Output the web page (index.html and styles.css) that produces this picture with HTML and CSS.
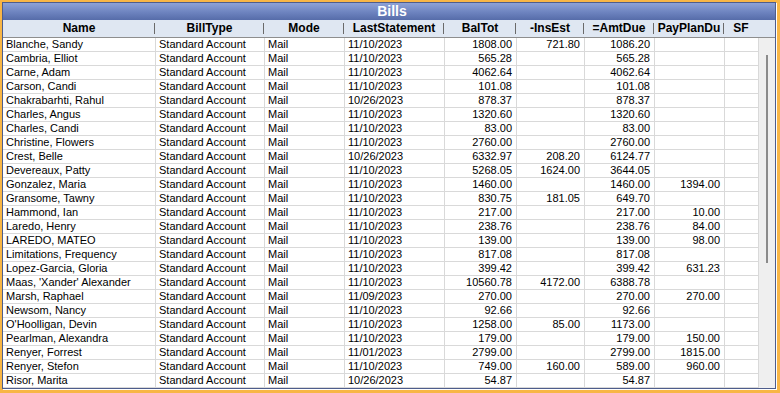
FILE: index.html
```html
<!DOCTYPE html>
<html>
<head>
<meta charset="utf-8">
<link rel="stylesheet" href="styles.css">
</head>
<body>
<div class="win">
  <div class="title">Bills</div>
  <div class="head">
    <span>Name</span><span>BillType</span><span>Mode</span><span>LastStatement</span><span>BalTot</span><span>-InsEst</span><span>=AmtDue</span><span>PayPlanDu</span><span class="last">SF</span><span class="last"></span>
  </div>
  <div class="body">
    <div class="rows">
      <div class="r"><span>Blanche, Sandy</span><span>Standard Account</span><span>Mail</span><span>11/10/2023</span><span>1808.00</span><span>721.80</span><span>1086.20</span><span></span><span></span></div>
      <div class="r"><span>Cambria, Elliot</span><span>Standard Account</span><span>Mail</span><span>11/10/2023</span><span>565.28</span><span></span><span>565.28</span><span></span><span></span></div>
      <div class="r"><span>Carne, Adam</span><span>Standard Account</span><span>Mail</span><span>11/10/2023</span><span>4062.64</span><span></span><span>4062.64</span><span></span><span></span></div>
      <div class="r"><span>Carson, Candi</span><span>Standard Account</span><span>Mail</span><span>11/10/2023</span><span>101.08</span><span></span><span>101.08</span><span></span><span></span></div>
      <div class="r"><span>Chakrabarhti, Rahul</span><span>Standard Account</span><span>Mail</span><span>10/26/2023</span><span>878.37</span><span></span><span>878.37</span><span></span><span></span></div>
      <div class="r"><span>Charles, Angus</span><span>Standard Account</span><span>Mail</span><span>11/10/2023</span><span>1320.60</span><span></span><span>1320.60</span><span></span><span></span></div>
      <div class="r"><span>Charles, Candi</span><span>Standard Account</span><span>Mail</span><span>11/10/2023</span><span>83.00</span><span></span><span>83.00</span><span></span><span></span></div>
      <div class="r"><span>Christine, Flowers</span><span>Standard Account</span><span>Mail</span><span>11/10/2023</span><span>2760.00</span><span></span><span>2760.00</span><span></span><span></span></div>
      <div class="r"><span>Crest, Belle</span><span>Standard Account</span><span>Mail</span><span>10/26/2023</span><span>6332.97</span><span>208.20</span><span>6124.77</span><span></span><span></span></div>
      <div class="r"><span>Devereaux, Patty</span><span>Standard Account</span><span>Mail</span><span>11/10/2023</span><span>5268.05</span><span>1624.00</span><span>3644.05</span><span></span><span></span></div>
      <div class="r"><span>Gonzalez, Maria</span><span>Standard Account</span><span>Mail</span><span>11/10/2023</span><span>1460.00</span><span></span><span>1460.00</span><span>1394.00</span><span></span></div>
      <div class="r"><span>Gransome, Tawny</span><span>Standard Account</span><span>Mail</span><span>11/10/2023</span><span>830.75</span><span>181.05</span><span>649.70</span><span></span><span></span></div>
      <div class="r"><span>Hammond, Ian</span><span>Standard Account</span><span>Mail</span><span>11/10/2023</span><span>217.00</span><span></span><span>217.00</span><span>10.00</span><span></span></div>
      <div class="r"><span>Laredo, Henry</span><span>Standard Account</span><span>Mail</span><span>11/10/2023</span><span>238.76</span><span></span><span>238.76</span><span>84.00</span><span></span></div>
      <div class="r"><span>LAREDO, MATEO</span><span>Standard Account</span><span>Mail</span><span>11/10/2023</span><span>139.00</span><span></span><span>139.00</span><span>98.00</span><span></span></div>
      <div class="r"><span>Limitations, Frequency</span><span>Standard Account</span><span>Mail</span><span>11/10/2023</span><span>817.08</span><span></span><span>817.08</span><span></span><span></span></div>
      <div class="r"><span>Lopez-Garcia, Gloria</span><span>Standard Account</span><span>Mail</span><span>11/10/2023</span><span>399.42</span><span></span><span>399.42</span><span>631.23</span><span></span></div>
      <div class="r"><span>Maas, 'Xander' Alexander</span><span>Standard Account</span><span>Mail</span><span>11/10/2023</span><span>10560.78</span><span>4172.00</span><span>6388.78</span><span></span><span></span></div>
      <div class="r"><span>Marsh, Raphael</span><span>Standard Account</span><span>Mail</span><span>11/09/2023</span><span>270.00</span><span></span><span>270.00</span><span>270.00</span><span></span></div>
      <div class="r"><span>Newsom, Nancy</span><span>Standard Account</span><span>Mail</span><span>11/10/2023</span><span>92.66</span><span></span><span>92.66</span><span></span><span></span></div>
      <div class="r"><span>O'Hoolligan, Devin</span><span>Standard Account</span><span>Mail</span><span>11/10/2023</span><span>1258.00</span><span>85.00</span><span>1173.00</span><span></span><span></span></div>
      <div class="r"><span>Pearlman, Alexandra</span><span>Standard Account</span><span>Mail</span><span>11/10/2023</span><span>179.00</span><span></span><span>179.00</span><span>150.00</span><span></span></div>
      <div class="r"><span>Renyer, Forrest</span><span>Standard Account</span><span>Mail</span><span>11/01/2023</span><span>2799.00</span><span></span><span>2799.00</span><span>1815.00</span><span></span></div>
      <div class="r"><span>Renyer, Stefon</span><span>Standard Account</span><span>Mail</span><span>11/10/2023</span><span>749.00</span><span>160.00</span><span>589.00</span><span>960.00</span><span></span></div>
      <div class="r"><span>Risor, Marita</span><span>Standard Account</span><span>Mail</span><span>10/26/2023</span><span>54.87</span><span></span><span>54.87</span><span></span><span></span></div>
    </div>
    <div class="scroll"><div class="thumb"></div></div>
  </div>
</div>
</body>
</html>
```
FILE: styles.css
```css
html, body {
  margin: 0;
  padding: 0;
}
body {
  background: #f8b646;
  width: 780px;
  height: 393px;
  overflow: hidden;
  font-family: "Liberation Sans", Arial, sans-serif;
}
.win {
  box-sizing: border-box;
  margin: 2px 0 0 2px;
  width: 774px;
  height: 387px;
  border: 1px solid #4e5d8c;
  box-shadow: 1px 1px 0 #ffffff;
  background: #ffffff;
  display: flex;
  flex-direction: column;
  overflow: hidden;
}
.title {
  height: 17px;
  line-height: 17px;
  text-align: center;
  padding-left: 6px;
  color: #ffffff;
  font-weight: bold;
  font-size: 14px;
  background: linear-gradient(#8ea2d6, #6d83bf 55%, #566ca9);
  flex: none;
}
.head {
  flex: none;
  display: grid;
  grid-template-columns: 152px 109px 80px 100px 72px 68px 70px 70px 34px 16px;
  height: 18px;
  box-sizing: border-box;
  border-bottom: 1px solid #8e8e8e;
  background: #dfe7f2;
}
.head span {
  font-size: 12px;
  font-weight: bold;
  line-height: 17px;
  text-align: center;
  color: #000;
  white-space: nowrap;
  overflow: hidden;
  background: linear-gradient(#6a6a6a, #6a6a6a) right center / 1px 11px no-repeat;
}
.head span.last {
  background: none;
}
.body {
  flex: 1;
  display: flex;
  min-height: 0;
}
.rows {
  width: 756px;
  flex: none;
}
.r {
  display: grid;
  grid-template-columns: 153px 109px 80px 100px 72px 68px 70px 70px 34px;
  height: 14px;
}
.r span {
  box-sizing: border-box;
  border-right: 1px solid #d9d9d9;
  border-bottom: 1px solid #d9d9d9;
  font-size: 11px;
  line-height: 13px;
  padding-left: 3px;
  color: #000;
  white-space: nowrap;
  overflow: hidden;
}
.r span:nth-child(n+5):nth-child(-n+8) {
  text-align: right;
  padding-right: 4px;
  padding-left: 0;
}
.scroll {
  flex: 1;
  background: #efefef;
  padding-top: 17px;
  padding-left: 7px;
}
.thumb {
  width: 2px;
  height: 208px;
  background: #8b8b8b;
}
```
